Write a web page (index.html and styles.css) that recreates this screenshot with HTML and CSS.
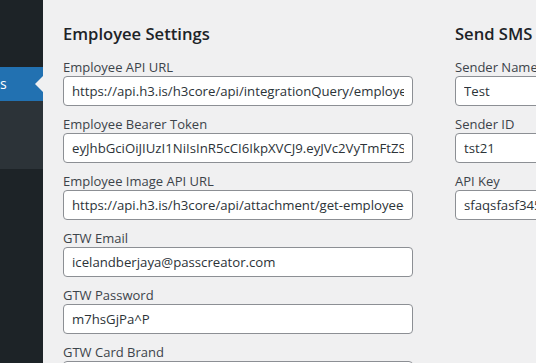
FILE: index.html
```html
<!DOCTYPE html>
<html lang="en">
<head>
    <meta charset="UTF-8">
    <meta name="viewport" content="width=device-width, initial-scale=1.0">
    <title>Settings</title>
    <link rel="stylesheet" href="styles.css">
</head>
<body>
    <div class="wrap">
        <aside class="adminmenu">
            <div class="menu-top"></div>
            <div class="menu-item current">s</div>
            <div class="submenu"></div>
        </aside>

        <main class="content">
            <section class="panel panel-employee">
                <h2>Employee Settings</h2>

                <div class="field">
                    <label for="emp_api">Employee API URL</label>
                    <input id="emp_api" type="text" value="https://api.h3.is/h3core/api/integrationQuery/employees">
                </div>
                <div class="field">
                    <label for="emp_token">Employee Bearer Token</label>
                    <input id="emp_token" type="text" value="eyJhbGciOiJIUzI1NiIsInR5cCI6IkpXVCJ9.eyJVc2VyTmFtZSI6ImFkbWluIn0">
                </div>
                <div class="field">
                    <label for="emp_img">Employee Image API URL</label>
                    <input id="emp_img" type="text" value="https://api.h3.is/h3core/api/attachment/get-employee-image">
                </div>
                <div class="field">
                    <label for="gtw_email">GTW Email</label>
                    <input id="gtw_email" type="text" value="icelandberjaya@passcreator.com">
                </div>
                <div class="field">
                    <label for="gtw_pass">GTW Password</label>
                    <input id="gtw_pass" type="text" value="m7hsGjPa^P">
                </div>
                <div class="field">
                    <label for="gtw_brand">GTW Card Brand</label>
                    <input id="gtw_brand" type="text" value="">
                </div>
            </section>

            <section class="panel panel-sms">
                <h2>Send SMS</h2>

                <div class="field">
                    <label for="sms_name">Sender Name</label>
                    <input id="sms_name" type="text" value="Test">
                </div>
                <div class="field">
                    <label for="sms_id">Sender ID</label>
                    <input id="sms_id" type="text" value="tst21">
                </div>
                <div class="field">
                    <label for="sms_key">API Key</label>
                    <input id="sms_key" type="text" value="sfaqsfasf345gdf7asd">
                </div>
            </section>
        </main>
    </div>
</body>
</html>
```

FILE: styles.css
```css
* {
    margin: 0;
    padding: 0;
    box-sizing: border-box;
}

body {
    font-family: "Open Sans", "Noto Sans", sans-serif;
    background: #f0f0f1;
    color: #3c434a;
    font-size: 13px;
    overflow: hidden;
}

.wrap {
    display: flex;
    min-height: 100vh;
}

/* left admin menu, cropped */
.adminmenu {
    width: 43px;
    flex-shrink: 0;
    background: #1d2327;
    display: flex;
    flex-direction: column;
}

.menu-top {
    height: 67px;
}

.menu-item {
    position: relative;
    height: 34px;
    line-height: 34px;
    color: #fff;
    font-size: 14px;
    white-space: nowrap;
}

.menu-item.current {
    background: #2271b1;
}

.menu-item.current::after {
    content: "";
    position: absolute;
    right: 0;
    top: 50%;
    margin-top: -8px;
    border: 8px solid transparent;
    border-right-color: #f0f0f1;
}

.submenu {
    height: 68px;
    background: #2c3338;
}

.content {
    flex: 1;
    display: flex;
    gap: 42px;
    padding: 22px 0 0 20px;
    min-width: 0;
}

.panel {
    flex-shrink: 0;
}

.panel-employee {
    width: 350px;
}

.panel-sms {
    width: 350px;
}

.panel h2 {
    color: #1d2327;
    font-size: 16.6px;
    font-weight: 600;
    line-height: 23px;
    margin-bottom: 13px;
}

.field {
    display: flex;
    flex-direction: column;
    margin-bottom: 9px;
}

.field label {
    font-size: 13px;
    line-height: 18px;
}

.field input {
    font-family: inherit;
    font-size: 13.2px;
    color: #2c3338;
    height: 30px;
    padding: 0 8px;
    background: #fff;
    border: 1px solid #8c8f94;
    border-radius: 4px;
    outline: none;
}
```
